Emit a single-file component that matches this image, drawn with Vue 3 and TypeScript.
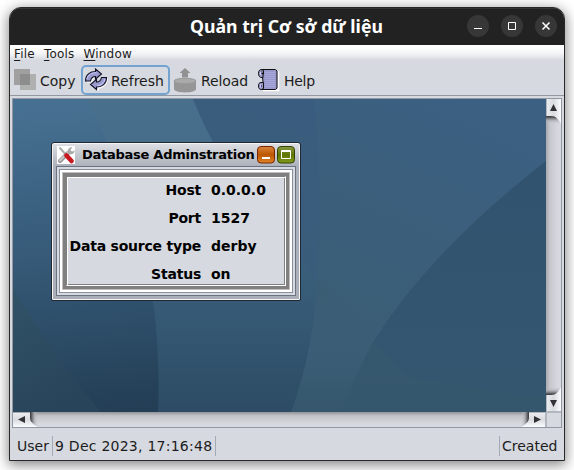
<script setup lang="ts">
interface Row { label: string; value: string }
const menus: string[] = ['File', 'Tools', 'Window']
const rows: Row[] = [
  { label: 'Host', value: '0.0.0.0' },
  { label: 'Port', value: '1527' },
  { label: 'Data source type', value: 'derby' },
  { label: 'Status', value: 'on' },
]
</script>

<template>
  <div class="screen">
    <main class="window">
      <header class="titlebar">
        <h1>Quản trị Cơ sở dữ liệu</h1>
        <div class="controls">
          <svg width="22" height="22"><circle cx="11" cy="11" r="11" /><path d="M7 13.500h8" /></svg>
          <svg width="22" height="22"><circle cx="11" cy="11" r="11" /><path d="M7.500 7.500h7v7h-7z" /></svg>
          <svg width="22" height="22"><circle cx="11" cy="11" r="11" /><path d="M7.500 7.500l7 7M14.500 7.500l-7 7" stroke-width="1.5" /></svg>
        </div>
      </header>
      <nav class="menubar">
        <span v-for="m in menus" :key="m"><span class="mn">{{ m[0] }}</span>{{ m.slice(1) }}</span>
      </nav>
      <div class="toolbar">
        <div class="tool copy">
          <svg width="24" height="24"><path d="M1 1h16v16H1z" fill="#a0a0a0" /><path d="M7 6h16v16H7z" fill="#a8a8a8" fill-opacity=".85" /><path d="M7 6h10v11H7z" fill="#8d8d8d" /></svg>
          <span>Copy</span>
        </div>
        <div class="tool refresh">
          <svg width="24" height="24" viewBox="0 0 24 24">
            <g fill="none" stroke="#fff" transform="translate(1 1)">
              <path d="M11.500 8.500C8 8.500 7 10.500 6.500 13H2M22.500 9.500C22 16 18 19 13.500 19v2.500l-5-5" />
            </g>
            <g fill="#9999cc" stroke="#111126" stroke-width="1.1">
              <path d="M1.500 13C1.500 6.500 6 3.500 11.500 3.500V1l6 5-6 5V8.500C8 8.500 7 10.500 6.500 13z" />
              <path d="M22.500 9.500C22.500 16 18 19 12.500 19v2.500l-6-5 6-5V14c3.500 0 4.500-2 5-4.500z" />
            </g>
            <path d="M3 11C4 6.500 8 4.700 12.300 4.700M21 11c-1 4-4 6.500-8 6.800" fill="none" stroke="#ccccff" />
          </svg>
          <span>Refresh</span>
        </div>
        <div class="tool reload">
          <svg width="24" height="26" viewBox="0 0 24 26"><path d="M12 1l5.500 5H15v4.500H9V6H6.500z" fill="#929292" /><path d="M1 14v8c0 4.500 22 4.500 22 0v-8z" fill="#969696" /><ellipse cx="12" cy="14" rx="11" ry="2.700" fill="#aaa" stroke="#999" /></svg>
          <span>Reload</span>
        </div>
        <div class="tool help">
          <svg width="22" height="24" viewBox="0 0 22 24">
            <path d="M5 22.500h15.500V3" fill="none" stroke="#fff" stroke-width="1.500" />
            <path d="M3.500 1.500h14l1.500 1.500v17l-1.500 1.500h-14L5 18.500v-4L4.500 8z" fill="#9999cc" stroke="#111" />
            <path d="M7 4.500h10M7 6.500h10M7 8.500h10M7 10.500h10M7 12.500h10M7 14.500h10M7 16.500h10M7 18.500h10" stroke="#a8a8dc" />
            <path d="M3.500 1.500C1.500 1.500.5 3 .5 5.500S2 9.500 3 9.500h2v-4H3.500M3 14.500c-1.500 0-2.500 1-2.500 3.500s1 3.500 3 3.500l2-1v-6zM3 17v2M3.500 1.500l2 1v4" fill="#9999cc" stroke="#111" />
            <path d="M2.500 4v3M2.500 16.500v3" stroke="#ccccff" />
          </svg>
          <span>Help</span>
        </div>
      </div>
      <section class="scrollpane">
        <div class="desktop">
          <svg class="wall" width="533" height="313" viewBox="13 99 533 313">
            <defs>
              <linearGradient id="base" x1="0" y1="0" x2="0.150" y2="1"><stop offset="0" stop-color="#477193" /><stop offset=".5" stop-color="#365a78" /><stop offset="1" stop-color="#233e55" /></linearGradient>
              <linearGradient id="mid" x1="0" y1="0" x2="0" y2="1"><stop offset="0" stop-color="#48708d" /><stop offset=".2" stop-color="#456c89" /><stop offset=".6" stop-color="#385d79" /><stop offset="1" stop-color="#2d4b64" /></linearGradient>
              <linearGradient id="rt" x1="1" y1="0" x2=".5" y2="1"><stop offset="0" stop-color="#3b6083" /><stop offset="1" stop-color="#3b5e73" /></linearGradient>
              <linearGradient id="dk" x1="0" y1="0" x2="0" y2="1"><stop offset="0" stop-color="#31536f" /><stop offset="1" stop-color="#35566f" /></linearGradient>
              <linearGradient id="gr" x1="0" y1="0" x2=".4" y2="1"><stop offset="0" stop-color="#315368" /><stop offset="1" stop-color="#28445a" /></linearGradient>
              <linearGradient id="lo" x1="0" y1="0" x2="0" y2="1"><stop offset="0" stop-color="#3b5d74" /><stop offset=".55" stop-color="#3b5e77" /><stop offset="1" stop-color="#35566c" /></linearGradient>
            </defs>
            <path d="M13 99h533v313H13z" fill="url(#base)" />
            <path d="M13 287Q50 352 101 412H13z" fill="url(#gr)" />
            <path d="M86 99C122 166 164 268 158 412H546V99z" fill="url(#mid)" />
            <path d="M193 99Q227 184 300 262L317 280L373 342L410 378L546 398V99z" fill="url(#rt)" />
            <path d="M193 99Q227 184 300 262L317 280Q323 190 314 99z" fill="#395c80" fill-opacity=".45" />
            <path d="M317 280Q314 350 291 412H546V345L373 342z" fill="url(#lo)" />
            <path d="M546 161Q430 251 373 342L410 378L546 398z" fill="url(#dk)" />
            <path d="M373 342Q360 365 342 412H546V398L410 378z" fill="#35576c" fill-opacity=".75" />
          </svg>
          <article class="iframe">
            <div class="ititle">
              <svg class="logo" width="18" height="18" viewBox="0 0 18 18">
                <path d="M0 0h18v18H0z" fill="#fff" />
                <path d="M2.500 1.500l8 9" stroke="#aaa" stroke-width="2" />
                <path d="M3 15l8-8" stroke="#929292" stroke-width="4" stroke-linecap="round" /><path d="M3 14.500l8-8" stroke="#cacaca" stroke-width="2" stroke-linecap="round" />
                <path d="M15.500 1.500l-2 2 .5 1.500 2 .5 1.500-1.500c.5 3-2 5-5 4L10.500 6c0-3 2-5.500 5-4.500z" fill="#aaa" />
                <path d="M9.500 9.500l5 5.500" stroke="#c91920" stroke-width="4.500" stroke-linecap="round" />
              </svg>
              <h2>Database Adminstration</h2>
              <svg width="18" height="18" class="b1"><defs><linearGradient id="o" x2="0" y2="1"><stop stop-color="#d98640" /><stop offset=".5" stop-color="#bc5700" /><stop offset="1" stop-color="#e08428" /></linearGradient></defs><rect x=".5" y=".5" width="17" height="16.500" rx="3.500" fill="url(#o)" stroke="#792500" /><path d="M5 12h8" stroke="#fff" stroke-width="2" /></svg>
              <svg width="18" height="18" class="b2"><defs><linearGradient id="g" x2="0" y2="1"><stop stop-color="#879847" /><stop offset=".5" stop-color="#5c7700" /><stop offset="1" stop-color="#839a1d" /></linearGradient></defs><rect x=".5" y=".5" width="17" height="16.500" rx="3.500" fill="url(#g)" stroke="#354400" /><path d="M4.500 4.500h9v8h-9zM4 5.500h10" fill="none" stroke="#fff" /></svg>
            </div>
            <div class="l1"><div class="l2"><div class="l3"><div class="l4"><div class="l5">
              <dl>
                <template v-for="r in rows" :key="r.label"><dt>{{ r.label }}</dt><dd>{{ r.value }}</dd></template>
              </dl>
            </div></div></div></div></div>
          </article>
        </div>
        <div class="vbar">
          <svg width="15" height="26" viewBox="0 0 15 26"><path d="M0 17H9L15 25H0z" fill="url(#sh)" /><defs><linearGradient id="sh" x2="0" y2="1"><stop stop-color="#333" /><stop offset=".2" stop-color="#606166" /><stop offset=".55" stop-color="#a5a7ac" stop-opacity=".7" /><stop offset="1" stop-color="#c7cad0" stop-opacity="0" /></linearGradient><linearGradient id="bt"><stop stop-color="#eceef2" /><stop offset=".5" stop-color="#d8dbdf" /><stop offset="1" stop-color="#fafcff" /></linearGradient></defs><path d="M0 0h15v25C13 20 10 17 5 17H0z" fill="url(#bt)" /><path d="M.5 0v17" stroke="#b2b6bf" /><path d="M7.500 5l3.500 7H4z" fill="#303236" /></svg>
          <svg class="flip" width="15" height="26" viewBox="0 0 15 26"><path d="M0 17H9L15 25H0z" fill="url(#sh)" /><path d="M0 0h15v25C13 20 10 17 5 17H0z" fill="url(#bt)" /><path d="M.5 0v17M0 .5h15" stroke="#b2b6bf" /><path d="M7.500 5l3.500 7H4z" fill="#303236" /></svg>
        </div>
        <div class="hbar">
          <svg width="26" height="15" viewBox="0 0 26 15"><defs><linearGradient id="hs"><stop stop-color="#333" /><stop offset=".2" stop-color="#606166" /><stop offset=".55" stop-color="#a5a7ac" stop-opacity=".7" /><stop offset="1" stop-color="#c7cad0" stop-opacity="0" /></linearGradient><linearGradient id="hb" x2="0" y2="1"><stop stop-color="#eceef2" /><stop offset=".5" stop-color="#d8dbdf" /><stop offset="1" stop-color="#fafcff" /></linearGradient></defs><path d="M17 0V9L25 15V0z" fill="url(#hs)" /><path d="M0 0h17v5c0 5 3 8 8 10H0z" fill="url(#hb)" /><path d="M0 .5h17" stroke="#a5a8af" /><path d="M5 7.500L12 4v7z" fill="#303236" /></svg>
          <svg class="hflip" width="26" height="15" viewBox="0 0 26 15"><path d="M17 0V9L25 15V0z" fill="url(#hs)" /><path d="M0 0h17v5c0 5 3 8 8 10H0z" fill="url(#hb)" /><path d="M0 .5h17M.5 0v15" stroke="#b2b6bf" /><path d="M5 7.500L12 4v7z" fill="#303236" /></svg>
        </div>
        <div class="corner"></div>
      </section>
      <footer class="status">
        <span class="user">User</span><span class="date">9 Dec 2023, 17:16:48</span><span class="created">Created</span>
      </footer>
    </main>
  </div>
</template>

<style>
body { background: #fff; overflow: hidden; }
</style>
<style scoped>
* { box-sizing: border-box; }
svg { display: block; flex: none; }
.screen { width: 574px; height: 470px; padding: 7px 9px 9px; overflow: hidden; font: 14px/20px "DejaVu Sans", sans-serif; color: #1c1c1c; }
.window { width: 556px; height: 454px; display: flex; flex-direction: column; border: 1px solid #282828; border-radius: 12px 12px 0 0; background: #d6d9df; box-shadow: 0 3px 13px 1px rgba(0,0,0,.48); overflow: hidden; }
.titlebar { height: 37px; flex: none; background: #222; border-top: 1px solid #353535; display: grid; grid-template-columns: 180px 1fr auto; align-items: center; padding: 0 7px 2px 0; }
h1 { grid-column: 2; margin: 0; white-space: nowrap; color: #fff; font: bold 17.700px/24px "Noto Sans", sans-serif; }
.controls { display: flex; gap: 12px; }
.controls circle { fill: #373737; }
.controls path { fill: none; stroke: #fff; }
.menubar { height: 15px; flex: none; background: linear-gradient(#fff 15%, #f2f3f5 60%, #d6d9df); display: flex; gap: 9px; padding-left: 4px; font-size: 12px; line-height: 19px; letter-spacing: .2px; }
.mn { text-decoration: underline; text-underline-offset: 2px; text-decoration-thickness: 1px; }
.toolbar { height: 36px; flex: none; border-bottom: 1px solid #9297a1; display: flex; align-items: flex-end; padding-left: 3px; }
.tool { display: flex; align-items: center; height: 30px; gap: 3px; }
.tool span { padding-top: 2px; }
.copy { width: 68px; }
.refresh { width: 89px; border: 2px solid #73a4d1; border-radius: 5px; padding-left: 1px; gap: 3px; }
.reload { width: 85px; margin-left: 3px; gap: 4px; }
.reload span { letter-spacing: -.1px; }
.help { gap: 4px; }
.help span { letter-spacing: -.3px; }
.scrollpane { margin: 2px 2px 0; flex: none; height: 330px; border: 1px solid #9297a1; display: grid; grid-template-columns: 533px 15px; grid-template-rows: 313px 15px; }
.desktop { position: relative; overflow: hidden; }
.vbar { display: flex; flex-direction: column; justify-content: space-between; background: linear-gradient(90deg,#a6a8ad,#c5c7cd 25%,#d6d9df 80%); }
.hbar { display: flex; justify-content: space-between; background: linear-gradient(#929397,#c1c3c8 25%,#d6d9df 80%); }
.flip { transform: scaleY(-1); }
.hflip { transform: scaleX(-1); }
.corner { border: solid #b2b6bf; border-width: 1px 0 0 1px; }
.status { flex: 1; display: flex; align-items: center; padding: 3px 0 0 7px; }
.status span { height: 20px; line-height: 21px; white-space: nowrap; }
.user { width: 36px; border-right: 1px solid #a4a9b3; }
.date { width: 163px; padding-left: 2px; border-right: 1px solid #a4a9b3; letter-spacing: .25px; }
.created { margin-left: auto; width: 65px; padding-left: 2px; border-left: 1px solid #a4a9b3; }
.iframe { position: absolute; left: 38px; top: 43px; width: 250px; height: 159px; border: 1px solid #22272f; border-radius: 3px 3px 2px 2px; background: linear-gradient(#dee0e4,#acb1bb 23px,#a9aeb9); box-shadow: inset 0 0 0 1px #f3f4f6; padding: 0 4px; color: #000; font-weight: bold; }
.ititle { height: 23px; display: flex; align-items: center; padding-left: 1px; }
h2 { margin: 0 0 0 7px; width: 175px; white-space: nowrap; font: bold 13px/22px "DejaVu Sans", sans-serif; letter-spacing: -.26px; }
.b2 { margin-left: 2px; }
.l1 { height: 130px; border: 1px solid #6b7383; background: #d6d9df; padding: 2px; }
.l2 { height: 124px; border: 1px solid #8a909b; background: #fff; padding: 2px; }
.l3 { height: 118px; border: 1px solid #c0c0c0; }
.l4 { height: 116px; border: 3px solid #808080; }
.l5 { height: 110px; border: 1px solid; border-color: #808080 #fff #fff #808080; background: #d6d9df; box-shadow: inset 1px 1px #fff, inset -1px -1px #808080; overflow: hidden; }
dl { margin: -1px 0 0; display: grid; grid-template-columns: 134px 1fr; grid-auto-rows: 28px; column-gap: 10px; line-height: 28px; }
dt { text-align: right; white-space: nowrap; letter-spacing: -.22px; }
dd { margin: 0; }
</style>
